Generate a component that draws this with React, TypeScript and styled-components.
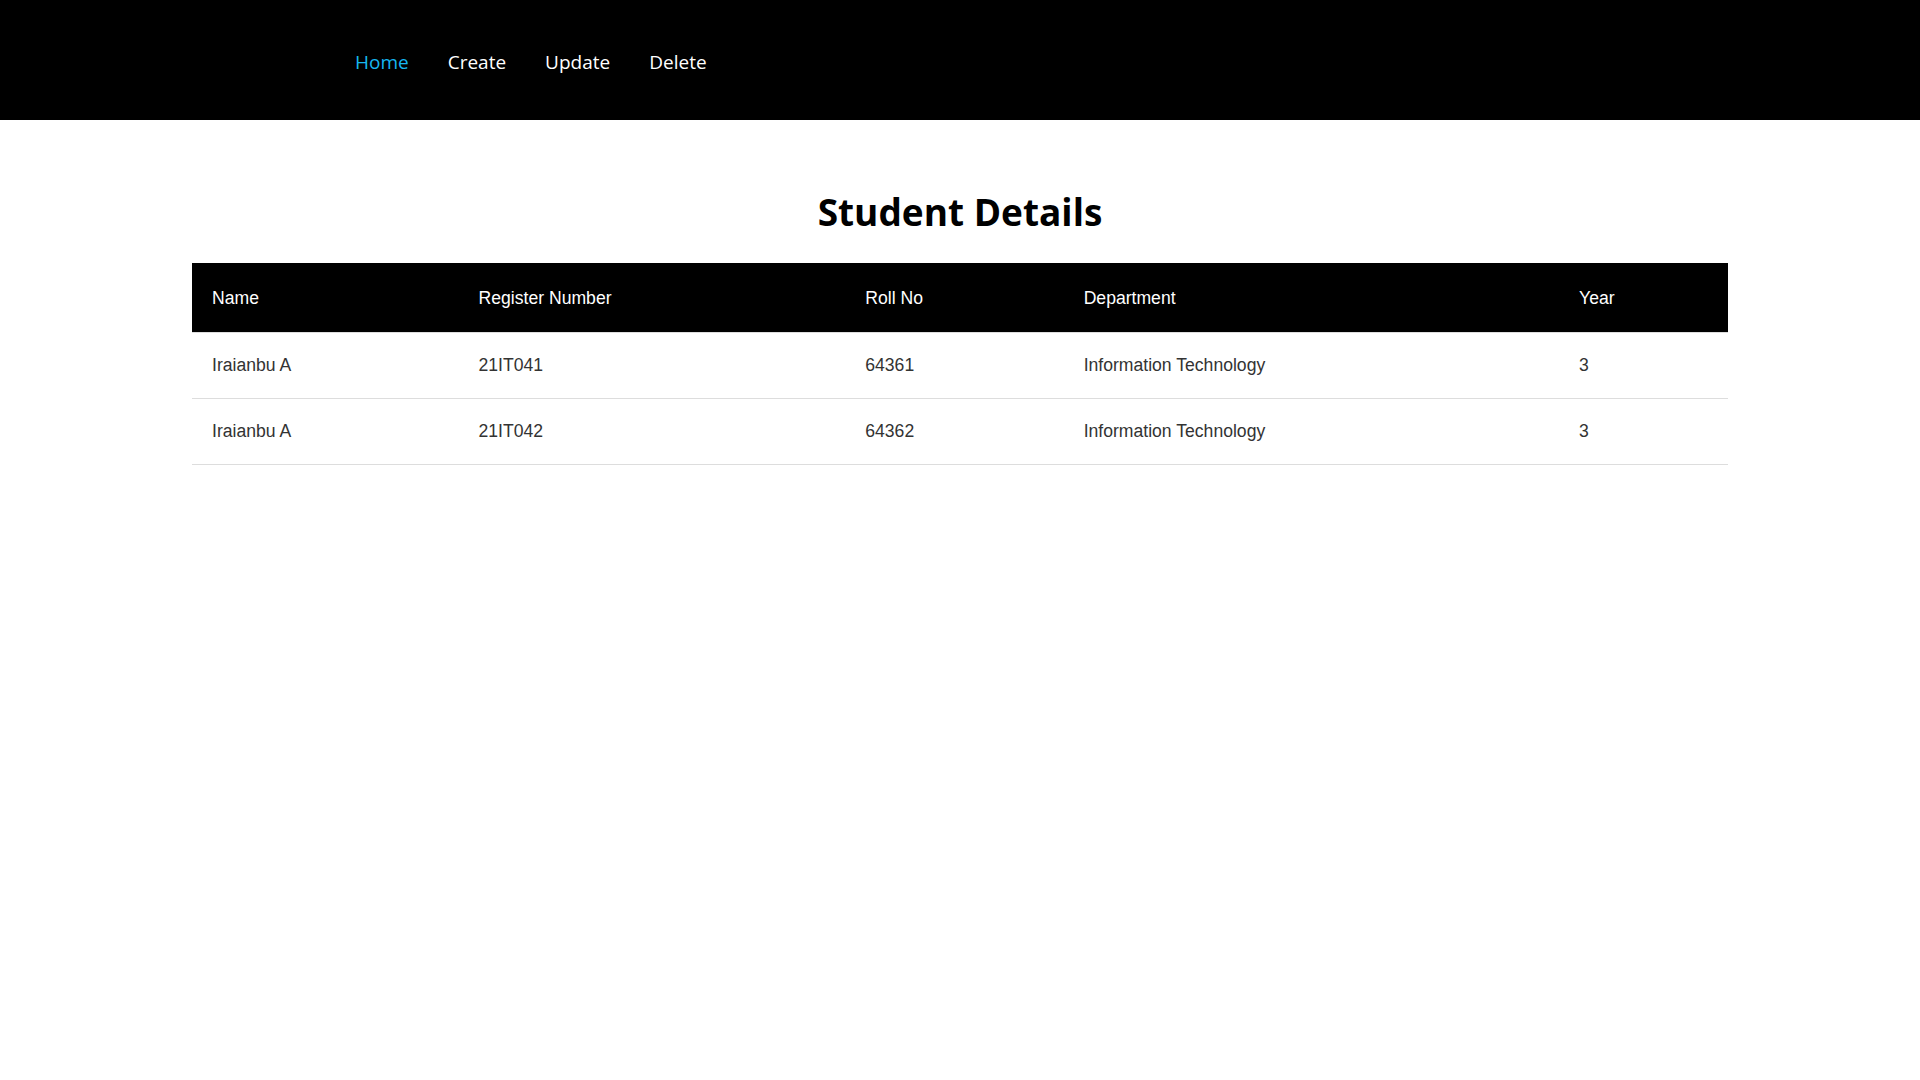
import React from "react";
import styled, { createGlobalStyle } from "styled-components";

const GlobalStyle = createGlobalStyle`
  html, body {
    margin: 0;
    padding: 0;
    background: #ffffff;
  }
  body {
    font-family: "Open Sans", "Noto Sans", sans-serif;
  }
`;

const NavBar = styled.nav`
  height: 120px;
  background: #000000;
  display: flex;
  align-items: center;
  padding-left: 355px;
  gap: 39px;
  box-sizing: border-box;
`;

const NavLink = styled.a<{ $active?: boolean }>`
  font-family: "Open Sans", "Noto Sans", sans-serif;
  font-size: 19px;
  color: ${(p) => (p.$active ? "#16b6ef" : "#ffffff")};
  text-decoration: none;
  cursor: pointer;
  line-height: 1;
  margin-top: 4px;
`;

const Main = styled.main`
  display: flex;
  flex-direction: column;
  align-items: center;
`;

const Title = styled.h1`
  font-family: "Open Sans", "Noto Sans", sans-serif;
  font-weight: 700;
  font-size: 37px;
  line-height: 50px;
  color: #000000;
  margin: 67px 0 26px;
  text-align: center;
`;

const Table = styled.table`
  width: 80%;
  border-collapse: collapse;
  font-family: "Liberation Sans", Arial, sans-serif;
  font-size: 17.6px;
  line-height: 20px;
`;

const HeadCell = styled.th`
  background: #000000;
  color: #ffffff;
  font-weight: 400;
  text-align: left;
  padding: 25px 20px 24px;
  border-bottom: 1px solid #dddddd;
`;

const Cell = styled.td`
  color: #333333;
  text-align: left;
  padding: 22px 20px 23px;
  border-bottom: 1px solid #dddddd;
`;

const students = [
  { name: "Iraianbu A", reg: "21IT041", roll: "64361", dept: "Information Technology", year: "3" },
  { name: "Iraianbu A", reg: "21IT042", roll: "64362", dept: "Information Technology", year: "3" },
];

export default function App() {
  return (
    <>
      <GlobalStyle />
      <NavBar>
        <NavLink $active>Home</NavLink>
        <NavLink>Create</NavLink>
        <NavLink>Update</NavLink>
        <NavLink>Delete</NavLink>
      </NavBar>
      <Main>
        <Title>Student Details</Title>
        <Table>
          <thead>
            <tr>
              <HeadCell>Name</HeadCell>
              <HeadCell>Register Number</HeadCell>
              <HeadCell>Roll No</HeadCell>
              <HeadCell>Department</HeadCell>
              <HeadCell>Year</HeadCell>
            </tr>
          </thead>
          <tbody>
            {students.map((s) => (
              <tr key={s.reg}>
                <Cell>{s.name}</Cell>
                <Cell>{s.reg}</Cell>
                <Cell>{s.roll}</Cell>
                <Cell>{s.dept}</Cell>
                <Cell>{s.year}</Cell>
              </tr>
            ))}
          </tbody>
        </Table>
      </Main>
    </>
  );
}
